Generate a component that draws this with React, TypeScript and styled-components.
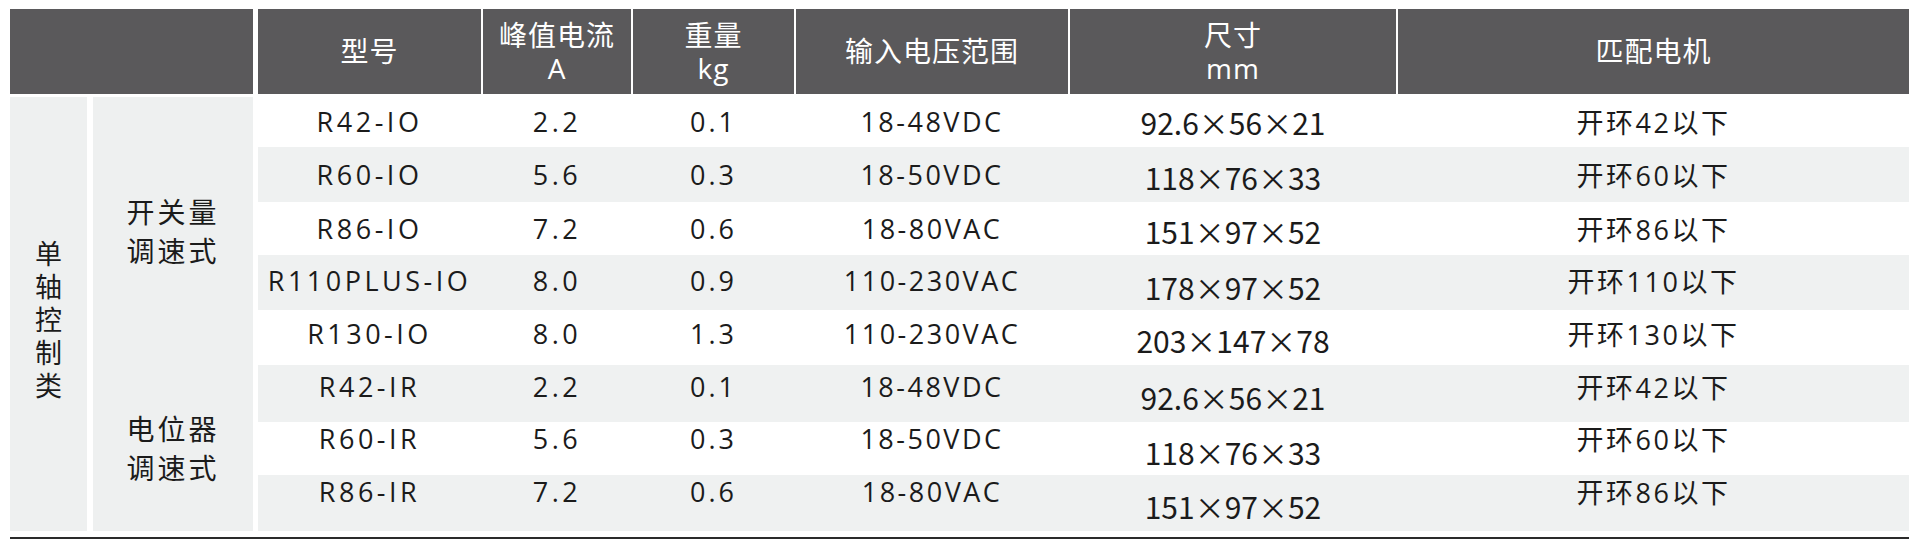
import styled, { createGlobalStyle } from 'styled-components';

const GlobalStyle = createGlobalStyle`
  html, body {
    margin: 0;
    padding: 0;
    background: #ffffff;
  }
  body {
    font-family: "Open Sans", "Noto Sans CJK SC", sans-serif;
    color: #1b1b1b;
  }
`;

const HEAD_BG = '#5a595b';
const STRIPE = '#eff1f1';
const SIDE_BG = '#eef0f0';
const COLS = '223px 148px 161px 272px 326px 511px';

const Page = styled.div`
  padding: 9px 0 0 10px;
  width: 1899px;
`;

const Table = styled.div`
  display: flex;
  gap: 5px;
`;

const Side = styled.div`
  width: 243px;
  display: flex;
  flex-direction: column;
`;

const SideHead = styled.div`
  height: 85px;
  background: ${HEAD_BG};
`;

const SideBody = styled.div`
  margin-top: 3px;
  height: 434px;
  display: flex;
  gap: 6px;
`;

const GroupCol = styled.div`
  width: 77px;
  background: ${SIDE_BG};
  display: flex;
  align-items: center;
  justify-content: center;
`;

const VerticalLabel = styled.div`
  width: 1em;
  font-family: "Noto Sans CJK SC", sans-serif;
  font-size: 27px;
  line-height: 33px;
  text-align: center;
  word-break: break-all;
  margin-top: 8px;
`;

const SubCol = styled.div`
  width: 160px;
  background: ${SIDE_BG};
  display: flex;
  flex-direction: column;
`;

const SubCell = styled.div<{ $h: number }>`
  height: ${(p) => p.$h}px;
  display: flex;
  align-items: center;
  justify-content: center;
  font-family: "Noto Sans CJK SC", sans-serif;
  font-size: 28px;
  line-height: 39px;
  letter-spacing: 3px;
  text-align: center;
`;

const Main = styled.div`
  width: 1651px;
  display: flex;
  flex-direction: column;
`;

const HeadRow = styled.div`
  height: 85px;
  display: grid;
  grid-template-columns: ${COLS};
  column-gap: 2px;
`;

const HeadCell = styled.div`
  background: ${HEAD_BG};
  color: #ffffff;
  display: flex;
  flex-direction: column;
  align-items: center;
  justify-content: center;
  font-size: 28px;
  line-height: 33px;
  letter-spacing: 1px;
`;

const HeadLine = styled.span`
  display: block;
  height: 33px;
`;

const Row = styled.div<{ $h: number; $striped: boolean }>`
  height: ${(p) => p.$h}px;
  display: grid;
  grid-template-columns: ${COLS};
  column-gap: 2px;
  background: ${(p) => (p.$striped ? STRIPE : '#ffffff')};
`;

const Cell = styled.div<{ $shift: number; $ls?: number }>`
  display: flex;
  align-items: center;
  justify-content: center;
  font-size: 27px;
  letter-spacing: ${(p) => p.$ls ?? 2}px;
  white-space: nowrap;
  transform: translateY(${(p) => p.$shift}px);
`;

const DimCell = styled(Cell)`
  font-family: "Noto Sans CJK SC", sans-serif;
  font-size: 30px;
  letter-spacing: 0;
`;

const BottomRule = styled.div`
  margin-top: 6px;
  height: 2px;
  background: #2b2b2b;
`;

type Item = {
  model: string;
  peak: string;
  weight: string;
  voltage: string;
  size: string;
  motor: string;
  h: number;
  shift: number;
  dimShift: number;
};

const rows: Item[] = [
  { model: 'R42-IO', peak: '2.2', weight: '0.1', voltage: '18-48VDC', size: '92.6×56×21', motor: '开环42以下', h: 53, shift: 1, dimShift: 1 },
  { model: 'R60-IO', peak: '5.6', weight: '0.3', voltage: '18-50VDC', size: '118×76×33', motor: '开环60以下', h: 55, shift: 0, dimShift: 2 },
  { model: 'R86-IO', peak: '7.2', weight: '0.6', voltage: '18-80VAC', size: '151×97×52', motor: '开环86以下', h: 53, shift: 0, dimShift: 2 },
  { model: 'R110PLUS-IO', peak: '8.0', weight: '0.9', voltage: '110-230VAC', size: '178×97×52', motor: '开环110以下', h: 55, shift: -2, dimShift: 4 },
  { model: 'R130-IO', peak: '8.0', weight: '1.3', voltage: '110-230VAC', size: '203×147×78', motor: '开环130以下', h: 55, shift: -4, dimShift: 2 },
  { model: 'R42-IR', peak: '2.2', weight: '0.1', voltage: '18-48VDC', size: '92.6×56×21', motor: '开环42以下', h: 57, shift: -7, dimShift: 3 },
  { model: 'R60-IR', peak: '5.6', weight: '0.3', voltage: '18-50VDC', size: '118×76×33', motor: '开环60以下', h: 53, shift: -10, dimShift: 3 },
  { model: 'R86-IR', peak: '7.2', weight: '0.6', voltage: '18-80VAC', size: '151×97×52', motor: '开环86以下', h: 56, shift: -12, dimShift: 3 },
];

const App = () => (
  <>
    <GlobalStyle />
    <Page>
      <Table>
        <Side>
          <SideHead />
          <SideBody>
            <GroupCol>
              <VerticalLabel>单轴控制类</VerticalLabel>
            </GroupCol>
            <SubCol>
              <SubCell $h={268}>开关量<br />调速式</SubCell>
              <SubCell $h={166}>电位器<br />调速式</SubCell>
            </SubCol>
          </SideBody>
        </Side>
        <Main>
          <HeadRow>
            <HeadCell>型号</HeadCell>
            <HeadCell>
              <HeadLine>峰值电流</HeadLine>
              <HeadLine>A</HeadLine>
            </HeadCell>
            <HeadCell>
              <HeadLine>重量</HeadLine>
              <HeadLine>kg</HeadLine>
            </HeadCell>
            <HeadCell>输入电压范围</HeadCell>
            <HeadCell>
              <HeadLine>尺寸</HeadLine>
              <HeadLine>mm</HeadLine>
            </HeadCell>
            <HeadCell>匹配电机</HeadCell>
          </HeadRow>
          {rows.map((r, i) => (
            <Row key={r.model} $h={r.h} $striped={i % 2 === 1}>
              <Cell $shift={r.shift} $ls={3.5}>{r.model}</Cell>
              <Cell $shift={r.shift} $ls={3.5}>{r.peak}</Cell>
              <Cell $shift={r.shift} $ls={3}>{r.weight}</Cell>
              <Cell $shift={r.shift} $ls={2.5}>{r.voltage}</Cell>
              <DimCell $shift={r.dimShift}>{r.size}</DimCell>
              <Cell $shift={r.shift} $ls={2.5}>{r.motor}</Cell>
            </Row>
          ))}
        </Main>
      </Table>
      <BottomRule />
    </Page>
  </>
);

export default App;
